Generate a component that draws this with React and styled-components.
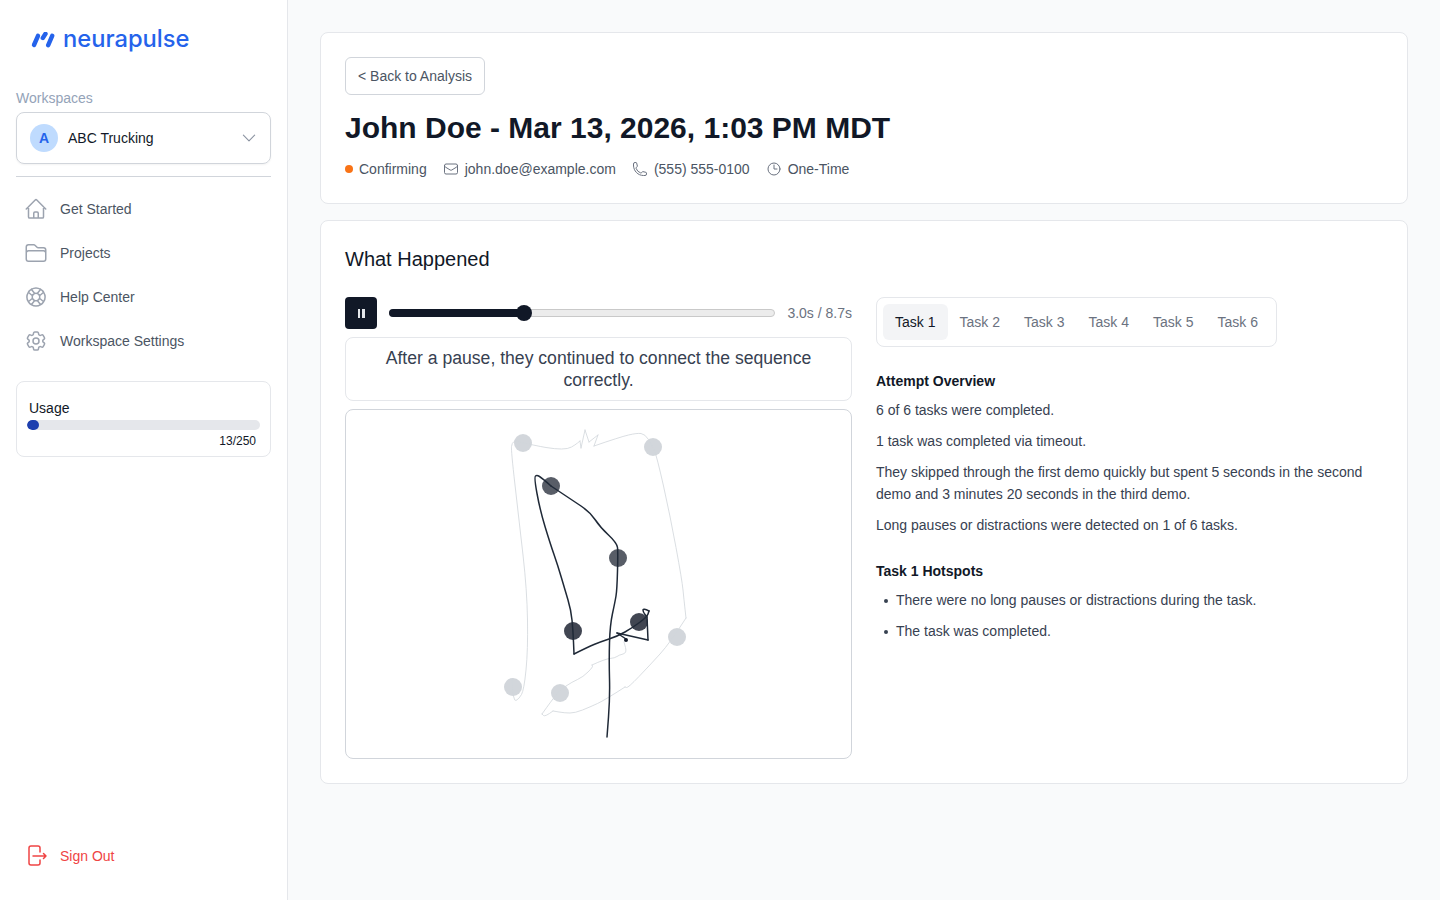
import React from "react";
import styled, { createGlobalStyle } from "styled-components";
import {
  HiOutlineHome,
  HiOutlineFolder,
  HiOutlineLifebuoy,
  HiOutlineCog6Tooth,
  HiOutlineEnvelope,
  HiOutlinePhone,
  HiOutlineClock,
  HiOutlineChevronDown,
} from "react-icons/hi2";

const GlobalStyle = createGlobalStyle`
  html, body { margin: 0; padding: 0; background: #f9fafb; }
  body { font-family: "Liberation Sans", Arial, sans-serif; color: #111827; }
  * { box-sizing: border-box; }
`;

const Page = styled.div`
  display: flex;
  min-height: 900px;
`;

const Sidebar = styled.aside`
  width: 288px;
  height: 900px;
  flex-shrink: 0;
  background: #fff;
  border-right: 1px solid #e5e7eb;
  padding: 0 16px 0 16px;
  display: flex;
  flex-direction: column;
`;

const LogoRow = styled.div`
  height: 80px;
  padding: 0 0 0 15px;
  display: flex;
  align-items: center;
  gap: 7px;
`;

const LogoText = styled.span`
  font-family: Inter, sans-serif;
  font-size: 23.7px;
  font-weight: 500;
  color: #2563eb;
  line-height: 1;
  position: relative;
  top: -1px;
`;

const SideLabel = styled.div`
  font-size: 14px;
  line-height: 20px;
  margin-top: 8px;
  margin-bottom: 4px;
  color: #94a3b8;
`;

const Select = styled.div`
  width: 255px;
  height: 52px;
  border: 1px solid #d1d5db;
  border-radius: 8px;
  box-shadow: 0 1px 2px rgba(0, 0, 0, 0.05);
  display: flex;
  align-items: center;
  padding: 0 12px 0 13px;
  gap: 10px;
  font-size: 14px;
  color: #111827;
  svg { margin-left: auto; width: 18px; height: 18px; color: #8b93a1; }
`;

const Avatar = styled.span`
  width: 28px;
  height: 28px;
  border-radius: 50%;
  background: #bfdbfe;
  color: #2563eb;
  font-weight: 700;
  font-size: 14px;
  display: flex;
  align-items: center;
  justify-content: center;
`;

const Divider = styled.div`
  width: 255px;
  height: 1px;
  background: #d1d5db;
  margin: 12px 0 10px;
`;

const NavItem = styled.div`
  height: 44px;
  display: flex;
  align-items: center;
  gap: 12px;
  padding-left: 8px;
  font-size: 14px;
  color: ${p => (p.$danger ? "#ef4444" : "#4b5563")};
  svg {
    width: 24px;
    height: 24px;
    color: ${p => (p.$danger ? "#ef4444" : "#9ca3af")};
    flex-shrink: 0;
  }
`;

const UsageCard = styled.div`
  width: 255px;
  height: 76px;
  margin-top: 18px;
  border: 1px solid #e5e7eb;
  border-radius: 8px;
  padding: 16px 10px 0;
`;

const UsageLabel = styled.div`
  font-size: 14px;
  line-height: 20px;
  padding-left: 2px;
  color: #111827;
`;

const UsageTrack = styled.div`
  height: 10px;
  border-radius: 5px;
  background: #e5e7eb;
  margin-top: 2px;
  overflow: hidden;
`;

const UsageFill = styled.div`
  height: 100%;
  border-radius: 5px;
  background: #1e40af;
`;

const UsageCount = styled.div`
  font-size: 12px;
  line-height: 16px;
  margin-top: 3px;
  padding-right: 4px;
  text-align: right;
  color: #111827;
`;

const SignOutWrap = styled.div`
  margin-top: auto;
  margin-bottom: 22px;
`;

const Main = styled.main`
  flex: 1;
  padding: 32px;
  display: flex;
  flex-direction: column;
  gap: 16px;
`;

const Card = styled.section`
  background: #fff;
  border: 1px solid #e5e7eb;
  border-radius: 8px;
  padding: 24px;
`;

const BackButton = styled.button`
  display: block;
  width: 140px;
  height: 38px;
  background: #fff;
  border: 1px solid #d1d5db;
  border-radius: 6px;
  font: inherit;
  font-size: 14px;
  color: #4b5563;
  padding: 0;
`;

const Title = styled.h1`
  margin: 15px 0 0;
  font-size: 30px;
  line-height: 36px;
  font-weight: 700;
  color: #111827;
`;

const Meta = styled.div`
  display: flex;
  align-items: center;
  gap: 16px;
  margin-top: 13px;
  height: 20px;
  font-size: 14px;
  color: #4b5563;
`;

const MetaItem = styled.span`
  display: inline-flex;
  align-items: center;
  gap: 6px;
  svg { width: 16px; height: 16px; color: #6b7280; }
`;

const StatusDot = styled.span`
  width: 8px;
  height: 8px;
  border-radius: 50%;
  background: #f97316;
`;

const SectionTitle = styled.h2`
  margin: 0;
  font-size: 20px;
  line-height: 28px;
  font-weight: 400;
  color: #111827;
`;

const Columns = styled.div`
  display: grid;
  grid-template-columns: 1fr 1fr;
  gap: 24px;
  margin-top: 24px;
`;

const LeftCol = styled.div`
  display: flex;
  flex-direction: column;
  gap: 8px;
`;

const Player = styled.div`
  display: flex;
  align-items: center;
  gap: 12px;
  height: 32px;
`;

const PauseButton = styled.button`
  width: 32px;
  height: 32px;
  border: none;
  border-radius: 4px;
  background: #111827;
  display: flex;
  align-items: center;
  justify-content: center;
  gap: 2px;
  padding: 0;
`;

const PauseBar = styled.span`
  width: 2.5px;
  height: 9px;
  background: #e5e7eb;
`;

const Track = styled.div`
  position: relative;
  flex: 1;
  height: 8px;
  border-radius: 4px;
  background: #ececec;
  border: 1px solid #c9c9c9;
`;

const TrackFill = styled.div`
  position: absolute;
  left: -1px;
  top: -1px;
  height: 8px;
  border-radius: 4px;
  background: #111827;
`;

const Thumb = styled.div`
  position: absolute;
  top: 50%;
  width: 16px;
  height: 16px;
  margin: -8px 0 0 -8px;
  border-radius: 50%;
  background: #111827;
`;

const Time = styled.span`
  font-size: 14px;
  color: #6b7280;
`;

const Caption = styled.div`
  border: 1px solid #e5e7eb;
  border-radius: 8px;
  padding: 9px 24px;
  font-size: 17.6px;
  line-height: 22px;
  text-align: center;
  color: #374151;
`;

const Canvas = styled.div`
  height: 350px;
  border: 1px solid #d1d5db;
  border-radius: 8px;
  overflow: hidden;
  svg { display: block; }
`;

const Tabs = styled.div`
  display: inline-flex;
  padding: 6px;
  border: 1px solid #e5e7eb;
  border-radius: 8px;
`;

const Tab = styled.div`
  width: 64.5px;
  height: 36px;
  border-radius: 6px;
  display: flex;
  align-items: center;
  justify-content: center;
  font-size: 14px;
  background: ${p => (p.$active ? "#f3f4f6" : "transparent")};
  color: ${p => (p.$active ? "#111827" : "#6b7280")};
`;

const Heading = styled.h3`
  margin: 24px 0 8px;
  font-size: 14px;
  line-height: 20px;
  font-weight: 700;
  color: #111827;
`;

const Para = styled.p`
  margin: 0 0 8px;
  font-size: 14px;
  line-height: 22.75px;
  color: #374151;
`;

const Bullets = styled.ul`
  margin: 0;
  padding: 0;
  list-style: none;
`;

const Bullet = styled.li`
  position: relative;
  padding-left: 20px;
  margin-bottom: 8px;
  font-size: 14px;
  line-height: 22.75px;
  color: #374151;
  &::before {
    content: "";
    position: absolute;
    left: 8px;
    top: 10px;
    width: 4px;
    height: 4px;
    border-radius: 50%;
    background: #374151;
  }
`;

const LogoMark = () => (
  <svg width="25" height="16" viewBox="0 0 25 16" fill="none" stroke="#2563eb" strokeWidth="4.400" strokeLinecap="round">
    <path d="M3 13 L7 3.800" />
    <path d="M11.800 6 L14.500 1.800" />
    <path d="M17.200 13.200 L21.200 3.800" />
  </svg>
);

const SignOutIcon = () => (
  <svg viewBox="0 0 24 24" fill="none" stroke="currentColor" strokeWidth="1.500" strokeLinecap="round" strokeLinejoin="round">
    <path d="M16 8V4A2 2 0 0 0 14 2H7A2 2 0 0 0 5 4V19A2 2 0 0 0 7 21H14A2 2 0 0 0 16 19V16" />
    <path d="M9 12H22M19.500 9.500L22 12L19.500 14.500" />
  </svg>
);

// rounds a polyline through the midpoints of its segments
const smooth = pts => {
  let d = `M${pts[0][0]} ${pts[0][1]}`;
  for (let i = 1; i < pts.length - 1; i++) {
    const mx = (pts[i][0] + pts[i + 1][0]) / 2;
    const my = (pts[i][1] + pts[i + 1][1]) / 2;
    d += ` Q${pts[i][0]} ${pts[i][1]} ${mx} ${my}`;
  }
  const last = pts[pts.length - 1];
  return `${d} L${last[0]} ${last[1]}`;
};

const GRAY_DOTS = [[523, 443], [653, 447], [677, 637], [513, 687], [560, 693]];
const DARK_DOTS = [[551, 486, 0.7], [618, 558, 0.7], [573, 631, 0.8], [639, 622, 0.8]];

const GRAY_LINES = [
  [[512, 680], [513, 702], [519, 699], [524, 690], [528, 650], [527, 590], [519, 520], [511, 450], [512, 443], [515, 441]],
  [[515, 441], [537, 446], [555, 449], [568, 449], [575, 445], [580, 441]],
  [[580, 441], [581, 448]],
  [[581, 448], [585, 430]],
  [[585, 430], [589, 442]],
  [[589, 442], [598, 435]],
  [[598, 435], [594, 446]],
  [[594, 446], [620, 437], [637, 433], [645, 434], [652, 445], [657, 457], [670, 515], [682, 580], [684, 600], [686, 618]],
  [[686, 618], [670, 643], [650, 665], [628, 688], [625, 687]],
  [[625, 687], [605, 700], [590, 707], [575, 713], [565, 713], [553, 711]],
  [[553, 711], [545, 717], [542, 714]],
  [[542, 714], [552, 700], [560, 690], [572, 682], [583, 677], [593, 667], [592, 665]],
  [[592, 665], [605, 659], [615, 658], [619, 655], [627, 653], [624, 642]],
];

const DARK_LINES = [
  [[551, 486], [542, 478], [537, 475], [534, 477], [540, 510], [550, 543], [558, 566], [565, 590], [571, 610], [573, 630], [574, 654]],
  [[574, 654], [588, 647], [600, 642], [618, 636], [632, 628], [647, 617], [649, 611]],
  [[649, 611], [643, 608], [643, 612], [647, 617]],
  [[647, 617], [648, 640]],
  [[648, 640], [617, 633]],
  [[617, 633], [626, 639]],
  [[551, 486], [572, 500], [590, 512], [600, 527], [617, 543], [618, 552], [617, 590], [615, 602], [610, 625], [609, 660], [610, 697], [607, 737]],
];

// drawn in page coordinates, the viewBox starts at the canvas corner
const Drawing = () => (
  <svg width="505" height="348" viewBox="346 410 505 348" fill="none" strokeLinecap="round" strokeLinejoin="round">
    {GRAY_DOTS.map(([x, y]) => (
      <circle key={`${x}-${y}`} cx={x} cy={y} r="9" fill="#9ca3af" fillOpacity="0.45" />
    ))}
    {DARK_DOTS.map(([x, y, o]) => (
      <circle key={`${x}-${y}`} cx={x} cy={y} r="9" fill="#111827" fillOpacity={o} />
    ))}
    {GRAY_LINES.map((pts, i) => (
      <path key={i} d={smooth(pts)} stroke="#d1d5db" strokeWidth="0.8" />
    ))}
    {DARK_LINES.map((pts, i) => (
      <path key={i} d={smooth(pts)} stroke="#1f2937" strokeWidth="1.5" />
    ))}
    <circle cx="626" cy="640" r="2" fill="#111827" />
  </svg>
);

const NAV = [
  { label: "Get Started", Icon: HiOutlineHome },
  { label: "Projects", Icon: HiOutlineFolder },
  { label: "Help Center", Icon: HiOutlineLifebuoy },
  { label: "Workspace Settings", Icon: HiOutlineCog6Tooth },
];

const TASKS = ["Task 1", "Task 2", "Task 3", "Task 4", "Task 5", "Task 6"];

export default function App() {
  return (
    <Page>
      <GlobalStyle />
      <Sidebar>
        <LogoRow>
          <LogoMark />
          <LogoText>neurapulse</LogoText>
        </LogoRow>
        <SideLabel>Workspaces</SideLabel>
        <Select>
          <Avatar>A</Avatar>
          ABC Trucking
          <HiOutlineChevronDown />
        </Select>
        <Divider />
        {NAV.map(({ label, Icon }) => (
          <NavItem key={label}>
            <Icon />
            {label}
          </NavItem>
        ))}
        <UsageCard>
          <UsageLabel>Usage</UsageLabel>
          <UsageTrack>
            <UsageFill style={{ width: `${(13 / 250) * 100}%` }} />
          </UsageTrack>
          <UsageCount>13/250</UsageCount>
        </UsageCard>
        <SignOutWrap>
          <NavItem $danger>
            <SignOutIcon />
            Sign Out
          </NavItem>
        </SignOutWrap>
      </Sidebar>
      <Main>
        <Card>
          <BackButton>&lt; Back to Analysis</BackButton>
          <Title>John Doe - Mar 13, 2026, 1:03 PM MDT</Title>
          <Meta>
            <MetaItem><StatusDot />Confirming</MetaItem>
            <MetaItem><HiOutlineEnvelope />john.doe@example.com</MetaItem>
            <MetaItem><HiOutlinePhone />(555) 555-0100</MetaItem>
            <MetaItem><HiOutlineClock />One-Time</MetaItem>
          </Meta>
        </Card>
        <Card>
          <SectionTitle>What Happened</SectionTitle>
          <Columns>
            <LeftCol>
              <Player>
                <PauseButton aria-label="Pause">
                  <PauseBar />
                  <PauseBar />
                </PauseButton>
                <Track>
                  <TrackFill style={{ width: `${(3 / 8.7) * 100}%` }} />
                  <Thumb style={{ left: `${(3 / 8.7) * 100 + 0.35}%` }} />
                </Track>
                <Time>3.0s / 8.7s</Time>
              </Player>
              <Caption>After a pause, they continued to connect the sequence correctly.</Caption>
              <Canvas>
                <Drawing />
              </Canvas>
            </LeftCol>
            <div>
              <Tabs>
                {TASKS.map((t, i) => (
                  <Tab key={t} $active={i === 0}>{t}</Tab>
                ))}
              </Tabs>
              <Heading>Attempt Overview</Heading>
              <Para>6 of 6 tasks were completed.</Para>
              <Para>1 task was completed via timeout.</Para>
              <Para>They skipped through the first demo quickly but spent 5 seconds in the second demo and 3 minutes 20 seconds in the third demo.</Para>
              <Para>Long pauses or distractions were detected on 1 of 6 tasks.</Para>
              <Heading>Task 1 Hotspots</Heading>
              <Bullets>
                <Bullet>There were no long pauses or distractions during the task.</Bullet>
                <Bullet>The task was completed.</Bullet>
              </Bullets>
            </div>
          </Columns>
        </Card>
      </Main>
    </Page>
  );
}
